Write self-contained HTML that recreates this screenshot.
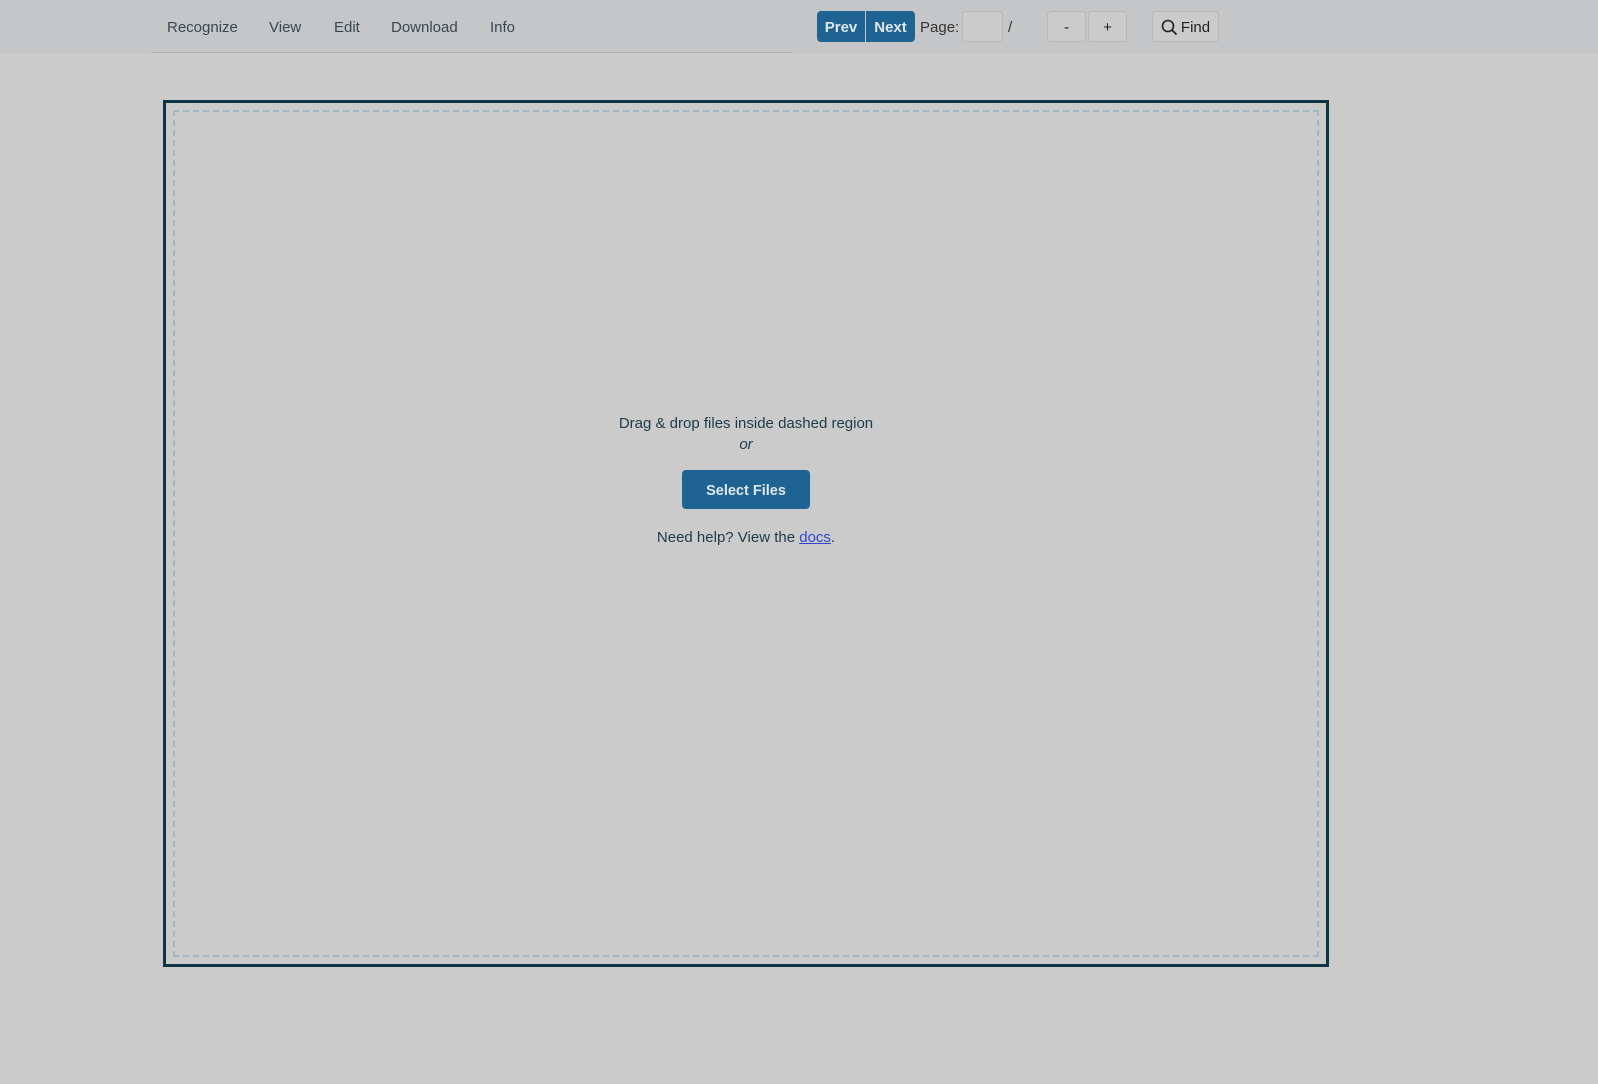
<!DOCTYPE html>
<html><head><meta charset="utf-8"><style>
*{box-sizing:border-box;margin:0;padding:0}
body{width:1598px;height:1084px;background:#cbcbcb;font-family:"Liberation Sans",sans-serif;position:relative;overflow:hidden;color:#1d3a4a}
.hdr{position:absolute;left:0;top:0;width:1598px;height:53px;background:#c5c6c8}
.line{position:absolute;left:151px;top:52px;width:642px;height:1px;background:#aeb0b2}
.nav{position:absolute;top:19px;font-size:15px;color:#3a4650}
.btn{position:absolute;top:11px;height:31px;border-radius:4px;font-size:15px;font-weight:bold;display:flex;align-items:center;justify-content:center;padding-top:2px}
.blue{background:#1f6393;color:#dfe6ec}
.gray{background:#cbcbcb;border:1px solid #b8b8b8;color:#222;font-weight:normal}
.box{position:absolute;left:163px;top:100px;width:1166px;height:867px;border:3px solid #0f3444}
.dash{position:absolute;left:173px;top:110px;width:1146px;height:847px;border:2px dashed #a3b6c4}
.c{position:absolute;left:0;width:1492px;text-align:center;font-size:15px;color:#1d3a4a}
</style></head><body>
<div class="hdr"></div>
<div class="line"></div>
<div class="nav" style="left:167px">Recognize</div>
<div class="nav" style="left:269px">View</div>
<div class="nav" style="left:334px">Edit</div>
<div class="nav" style="left:391px">Download</div>
<div class="nav" style="left:490px">Info</div>
<div class="btn blue" style="left:817px;width:48px;border-radius:4px 0 0 4px">Prev</div>
<div class="btn blue" style="left:866px;width:49px;border-radius:0 4px 4px 0">Next</div>
<div style="position:absolute;left:920px;top:19px;font-size:15px;color:#333">Page:</div>
<div class="btn gray" style="left:962px;width:41px"></div>
<div style="position:absolute;left:1008px;top:19px;font-size:15px;color:#333">/</div>
<div class="btn gray" style="left:1047px;width:39px">-</div>
<div class="btn gray" style="left:1088px;width:39px">+</div>
<div class="btn gray" style="left:1152px;width:67px;font-size:15px"><svg width="17" height="17" viewBox="0 0 17 17" style="margin-right:3px"><circle cx="7" cy="7" r="5.5" fill="none" stroke="#222" stroke-width="1.6"/><path d="M11 11l4.5 4.5" stroke="#222" stroke-width="1.8"/></svg>Find</div>
<div class="box"></div>
<div class="dash"></div>
<div class="c" style="top:415px">Drag &amp; drop files inside dashed region</div>
<div class="c" style="top:436px;font-style:italic">or</div>
<div class="btn blue" style="left:682px;top:470px;width:128px;height:39px;font-size:14.5px">Select Files</div>
<div class="c" style="top:529px">Need help? View the <span style="color:#3344cc;text-decoration:underline">docs</span>.</div>
</body></html>
